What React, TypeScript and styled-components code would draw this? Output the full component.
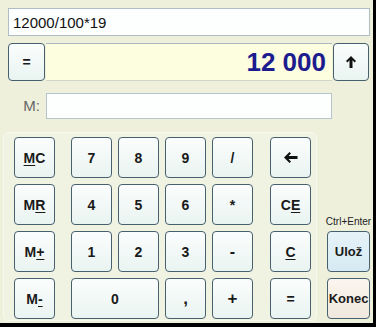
import React from 'react';
import styled, { createGlobalStyle } from 'styled-components';

const Global = createGlobalStyle`
  html, body { margin: 0; padding: 0; background: #000; }
  body { font-family: "Liberation Sans", Arial, sans-serif; }
`;

const Window = styled.div`
  width: 373px;
  height: 323px;
  box-sizing: border-box;
  background: #eef0dc;
  padding: 8px 0 0 8px;
  display: flex;
  flex-direction: column;
`;

const ExprInput = styled.div`
  width: 362px;
  height: 28px;
  box-sizing: border-box;
  border: 1px solid #aebdc8;
  background: #fdfefe;
  font-size: 15px;
  color: #111;
  padding-left: 4px;
  display: flex;
  align-items: center;
`;

const DisplayRow = styled.div`
  margin-top: 7px;
  height: 38px;
  display: flex;
  gap: 1px;
`;

const Btn = styled.button<{ $w?: number; $h?: number; $bg?: string; $span?: number; $size?: number }>`
  width: ${(p) => (p.$span ? 'auto' : `${p.$w ?? 41}px`)};
  height: ${(p) => p.$h ?? 41}px;
  ${(p) => (p.$span ? `grid-column: span ${p.$span};` : '')}
  box-sizing: border-box;
  border: 1px solid #46606e;
  border-radius: 4px;
  background: ${(p) => p.$bg ?? 'linear-gradient(#fbfdfd, #e9f4f1)'};
  font-family: "Liberation Sans", Arial, sans-serif;
  font-weight: bold;
  font-size: ${(p) => p.$size ?? 14}px;
  color: #1a1a1a;
  padding: 0;
  display: flex;
  align-items: center;
  justify-content: center;
  u { text-decoration-thickness: 1px; text-underline-offset: 2px; }
`;

const Display = styled.div`
  width: 286px;
  box-sizing: border-box;
  background: #fdfde0;
  border-top: 1px solid #a9b8c4;
  border-bottom: 1px solid #cfd6c8;
  font-weight: bold;
  font-size: 26px;
  color: #1c1c8e;
  display: flex;
  align-items: center;
  justify-content: flex-end;
  padding-right: 6px;
`;

const MRow = styled.div`
  margin-top: 12px;
  height: 26px;
  display: flex;
`;

const MLabel = styled.div`
  width: 38px;
  box-sizing: border-box;
  padding-right: 6px;
  text-align: right;
  font-size: 15px;
  color: #666;
  line-height: 26px;
`;

const MField = styled.div`
  width: 286px;
  box-sizing: border-box;
  border: 1px solid #b6c4cd;
  background: #fdfefe;
`;

const Keypad = styled.div`
  margin-top: 13px;
  margin-left: -5px;
  display: flex;
  gap: 10px;
`;

const Panel = styled.div`
  width: 314px;
  height: 189px;
  box-sizing: border-box;
  border: 1px solid #f7f9ec;
  border-radius: 5px;
  background: #f0f2e2;
  padding: 4px 5px 1px 10px;
  display: flex;
`;

const Col = styled.div`
  display: flex;
  flex-direction: column;
  gap: 6px;
`;

const NumGrid = styled.div`
  margin: 0 17px 0 16px;
  display: grid;
  grid-template-columns: repeat(4, 41px);
  grid-auto-rows: 41px;
  gap: 6px;
`;

const Side = styled.div`
  width: 43px;
  display: flex;
  flex-direction: column;
  justify-content: flex-end;
  align-items: center;
  padding-bottom: 2px;
`;

const Hint = styled.div`
  font-size: 10px;
  line-height: 12px;
  color: #222;
  margin-bottom: 3px;
  white-space: nowrap;
`;

const SideBtns = styled.div`
  display: flex;
  flex-direction: column;
  gap: 6px;
`;

const ArrowLeft = () => (
  <svg width="14" height="11" viewBox="0 0 14 11">
    <path d="M0 5.5 L5.5 0 L7 1.5 L4.5 4 H13.5 V7 H4.5 L7 9.5 L5.5 11 Z" fill="#111" />
  </svg>
);

const ArrowUp = () => (
  <svg width="10" height="12" viewBox="0 0 10 12">
    <path d="M5 0 L10 5 L8.6 6.4 L6.5 4.3 V12 H3.5 V4.3 L1.4 6.4 L0 5 Z" fill="#111" />
  </svg>
);

export default function App() {
  return (
    <>
      <Global />
      <Window>
        <ExprInput>12000/100*19</ExprInput>
        <DisplayRow>
          <Btn $w={37} $h={38}>=</Btn>
          <Display>12 000</Display>
          <Btn $w={36} $h={38}><ArrowUp /></Btn>
        </DisplayRow>
        <MRow>
          <MLabel>M:</MLabel>
          <MField />
        </MRow>
        <Keypad>
          <Panel>
            <Col>
              <Btn><u>M</u>C</Btn>
              <Btn>M<u>R</u></Btn>
              <Btn>M<u>+</u></Btn>
              <Btn>M<u>-</u></Btn>
            </Col>
            <NumGrid>
              <Btn>7</Btn><Btn>8</Btn><Btn>9</Btn><Btn>/</Btn>
              <Btn>4</Btn><Btn>5</Btn><Btn>6</Btn><Btn>*</Btn>
              <Btn>1</Btn><Btn>2</Btn><Btn>3</Btn><Btn $size={16}>-</Btn>
              <Btn $span={2}>0</Btn><Btn $size={17}>,</Btn><Btn $size={17}>+</Btn>
            </NumGrid>
            <Col>
              <Btn><ArrowLeft /></Btn>
              <Btn>C<u>E</u></Btn>
              <Btn><u>C</u></Btn>
              <Btn>=</Btn>
            </Col>
          </Panel>
          <Side>
            <Hint>Ctrl+Enter</Hint>
            <SideBtns>
              <Btn $w={43} $size={13} $bg="linear-gradient(#e6f3f8, #d6eaf3)">Ulož</Btn>
              <Btn $w={43} $size={13} $bg="linear-gradient(#faf5ee, #f0e8de)">Konec</Btn>
            </SideBtns>
          </Side>
        </Keypad>
      </Window>
    </>
  );
}
